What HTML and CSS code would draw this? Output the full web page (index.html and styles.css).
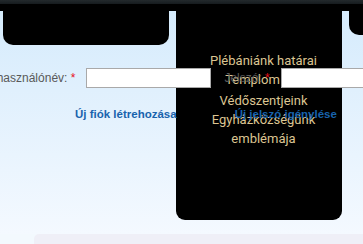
FILE: index.html
```html
<!DOCTYPE html>
<html lang="hu">
<head>
    <meta charset="UTF-8">
    <title>Bejelentkezés</title>
    <link rel="stylesheet" href="styles.css">
</head>
<body>
    <!-- felső sáv -->
    <div class="topbar"></div>

    <!-- lenyíló menük -->
    <div class="tab tab-left"></div>
    <div class="tab tab-menu">
        <ul>
            <li>Plébániánk határai</li>
            <li class="short">Templom</li>
            <li class="gap">Védőszentjeink</li>
            <li>Egyházközségünk emblémája</li>
        </ul>
    </div>
    <div class="tab tab-right"></div>

    <!-- bejelentkezés -->
    <div class="page">
        <form class="login">
            <div class="login-row">
                <label class="field-label">Felhasználónév: <span class="req">*</span></label>
                <input type="text" class="field-input first">
                <label class="field-label pass">Jelszó: <span class="req">*</span></label>
                <input type="password" class="field-input">
            </div>
            <div class="login-links">
                <a href="#" class="new-account">Új fiók létrehozása</a>
                <a href="#" class="new-pass">Új jelszó igénylése</a>
            </div>
        </form>
    </div>

    <div class="footer-band"></div>
</body>
</html>
```

FILE: styles.css
```css
/* alap */
html, body {
    margin: 0;
    padding: 0;
    width: 100%;
    height: 100%;
    overflow: hidden;
}

body {
    position: relative;
    font-family: "Liberation Sans", Arial, sans-serif;
    background: #f3f9fe;
    display: flex;
    flex-direction: column;
}

/* felső sáv */
.topbar {
    position: relative;
    z-index: 3;
    height: 11px;
    flex: none;
    background: linear-gradient(#23292c 0, #161b1e 4px, #000 4px, #000 11px);
}

/* oldal háttér */
.page {
    flex: 1;
    background: linear-gradient(#d5ebfc, #f4f9ff);
    position: relative;
}

/* fekete fülek */
.tab {
    position: absolute;
    top: 0;
    background: #000;
    z-index: 1;
}

.tab-left {
    left: 3px;
    width: 166px;
    height: 45px;
    border-radius: 0 0 10px 10px;
}

.tab-menu {
    left: 176px;
    width: 166px;
    height: 220px;
    border-radius: 0 0 9px 9px;
}

.tab-right {
    left: 349px;
    width: 40px;
    height: 35px;
    border-radius: 0 0 10px 10px;
}

.tab-menu ul {
    list-style: none;
    margin: 0;
    padding: 51px 16px 0 25px;
    text-align: center;
    font-family: Roboto, "Liberation Sans", sans-serif;
    font-size: 13px;
    line-height: 19px;
    color: #dcc592;
}

.tab-menu li.short {
    padding-right: 22px;
}

.tab-menu li.gap {
    margin-top: 2px;
}

/* bejelentkezés */
.login {
    position: relative;
    z-index: 2;
    padding-top: 57px;
    margin: 0;
}

.login-row {
    display: flex;
    align-items: center;
    margin-left: -20px;
    white-space: nowrap;
}

.field-label {
    font-size: 12px;
    color: #595959;
}

.req {
    color: #e8101c;
}

.field-input {
    flex: none;
    box-sizing: border-box;
    height: 20px;
    border: 1px solid #a9a9a9;
    background: #fff;
    margin: 0 0 0 11px;
    padding: 0;
}

.field-input.first {
    width: 125px;
}

.field-input:not(.first) {
    width: 120px;
}

.pass {
    margin-left: 13px;
}

.login-links {
    display: flex;
    margin-top: 20px;
    white-space: nowrap;
}

.login-links a {
    font-size: 11.5px;
    font-weight: bold;
    color: #1863ad;
    text-decoration: none;
}

.new-account {
    margin-left: 75px;
}

.new-pass {
    margin-left: 58px;
}

/* alsó sáv */
.footer-band {
    flex: none;
    height: 10px;
    margin-left: 34px;
    background: #efeff7;
    border-radius: 5px 0 0 0;
}
```
